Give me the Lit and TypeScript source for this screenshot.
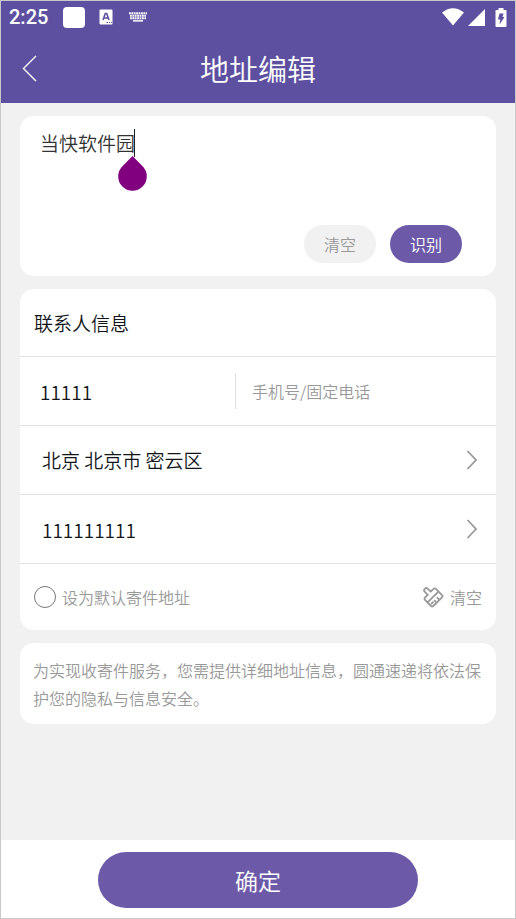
import { LitElement, html, css } from "lit";
import { customElement, state } from "lit/decorators.js";

@customElement("app-root")
export class AppRoot extends LitElement {
  @state() private address = "当快软件园";
  @state() private contact = "11111";
  @state() private phone = "";
  @state() private street = "111111111";

  static styles = css`
    :host {
      display: flex;
      flex-direction: column;
      box-sizing: border-box;
      min-height: 100vh;
      border: 1px solid #c9c9c9;
      background: #f1f1f1;
      color: #111518;
      font-family: Roboto, "Noto Sans CJK SC", sans-serif;
      font-size: 19px;
      font-weight: 350;
      line-height: 28px;
    }
    * {
      box-sizing: border-box;
    }
    button,
    input,
    textarea {
      margin: 0;
      padding: 0;
      border: 0;
      outline: 0;
      background: none;
      color: inherit;
      font: inherit;
      font-family: "Noto Sans CJK SC", sans-serif;
    }
    svg {
      display: block;
      flex: none;
    }
    .top {
      background: #5d50a1;
      color: #fff;
    }
    .status {
      display: flex;
      align-items: center;
      height: 32px;
      padding: 0 8px;
    }
    .time {
      font-size: 20px;
      font-weight: 500;
      margin-right: 15px;
    }
    .badge {
      width: 22px;
      height: 21px;
      border-radius: 4px;
      background: #fff;
      margin-right: 14px;
    }
    .lang {
      margin-right: 16px;
    }
    .signals {
      display: flex;
      align-items: center;
      gap: 4px;
      margin-left: auto;
    }
    .battery {
      margin-left: 6px;
    }
    .bar {
      display: grid;
      grid-template-columns: 56px 1fr 56px;
      align-items: center;
      height: 70px;
    }
    .back {
      display: flex;
      align-items: center;
      height: 56px;
      padding-left: 20px;
    }
    h1,
    h2,
    p {
      margin: 0;
      font-weight: 350;
      font-family: "Noto Sans CJK SC", sans-serif;
    }
    h1 {
      font-size: 29px;
      line-height: 42px;
      text-align: center;
    }
    main {
      display: flex;
      flex-direction: column;
      flex: 1;
      gap: 13px;
      padding: 13px 19px;
    }
    .card {
      border-radius: 14px;
      background: #fff;
    }
    .paste {
      display: flex;
      flex-direction: column;
      height: 160px;
      padding: 13px 34px 13px 20px;
    }
    .entry {
      position: relative;
      flex: 1;
    }
    .entry textarea {
      display: block;
      width: 100%;
      height: 84px;
      resize: none;
      color: #333;
    }
    .caret {
      position: absolute;
      top: 0;
      left: 94px;
      width: 1px;
      height: 28px;
      background: #222;
    }
    .handle {
      position: absolute;
      top: 27px;
      left: 78px;
    }
    .actions {
      display: flex;
      justify-content: flex-end;
      gap: 14px;
    }
    .pill {
      width: 72px;
      height: 38px;
      border-radius: 19px;
      font-size: 16px;
      background: #f1f1f1;
      color: #999;
    }
    .primary {
      background: #6c5aa9;
      color: #fff;
    }
    .row {
      display: flex;
      align-items: center;
      height: 69px;
      padding: 0 18px 0 22px;
      border-bottom: 1px solid #e2e2e2;
      width: 100%;
      text-align: left;
    }
    .title {
      height: 68px;
      padding: 0 14px;
    }
    h2 {
      font-size: 19px;
    }
    .row input[type="text"],
    .row input[type="tel"] {
      flex: 1;
      min-width: 0;
      height: 36px;
    }
    .pair {
      display: grid;
      grid-template-columns: 195px 1fr;
      padding-left: 20px;
    }
    .row input.phone {
      padding-left: 16px;
      border-left: 1px solid #dedede;
      font-size: 16px;
    }
    .phone::placeholder {
      color: #999;
      opacity: 1;
    }
    .region {
      border-radius: 0;
      justify-content: space-between;
    }
    .options {
      display: flex;
      justify-content: space-between;
      align-items: center;
      height: 66px;
      padding: 0 14px;
      color: #999;
      font-family: "Noto Sans CJK SC", sans-serif;
      font-size: 16px;
    }
    .default,
    .clear {
      display: flex;
      align-items: center;
      gap: 6px;
    }
    .default input {
      appearance: none;
      width: 22px;
      height: 22px;
      border: 1px solid #777;
      border-radius: 50%;
    }
    .default input:checked {
      background: #6c5aa9;
    }
    .note {
      padding: 13px 13px 12px;
      color: #999;
      font-size: 16px;
    }
    footer {
      display: flex;
      justify-content: center;
      padding: 12px 20px 10px;
      background: #fff;
    }
    .submit {
      width: 100%;
      max-width: 320px;
      height: 56px;
      border-radius: 28px;
      font-size: 23px;
    }
  `;

  private chevron() {
    return html`<svg width="12" height="20" viewBox="0 0 12 20" fill="none" stroke="#999" stroke-width="1.8">
      <path d="M1.5 1 L10 10 L1.5 19" />
    </svg>`;
  }

  private clearForm() {
    this.contact = "";
    this.phone = "";
    this.street = "";
  }

  render() {
    return html`
      <header class="top">
        <div class="status">
          <span class="time">2:25</span>
          <span class="badge"></span>
          <svg class="lang" width="14" height="16" viewBox="0 0 14 16">
            <rect x="0.5" y="0.5" width="13" height="15" rx="1" fill="#fff" />
            <path d="M4 11 L6.3 4.5 H7.7 L10 11 M5 9 H9" fill="none" stroke="#5d50a1" stroke-width="1.6" />
            <path d="M7.5 13.5 H9 M10 13.5 H11 M12 13.5 H13" stroke="#5d50a1" stroke-width="1.2" />
          </svg>
          <svg width="18" height="10" viewBox="0 0 18 10" fill="none" stroke="#fff">
            <path d="M0 1.2 H18 M1 3.7 H17 M1 6.2 H17" stroke-width="1.9" stroke-dasharray="1.8 0.6" />
            <path d="M4 8.8 H14" stroke-width="1.8" opacity="0.85" />
          </svg>
          <div class="signals">
            <svg width="22" height="18" viewBox="0 0 22 18">
              <path d="M0 4.5 Q11 -4 22 4.5 L11 17.5 Z" fill="#fff" />
            </svg>
            <svg width="17" height="17" viewBox="0 0 17 17"><path d="M17 0 V17 H0 Z" fill="#fff" /></svg>
            <svg class="battery" width="12" height="19" viewBox="0 0 12 19">
              <path d="M1 2 H3.5 V0 H8.5 V2 H11 Q11.5 2 11.5 3 V18 Q11.5 19 10.5 19 H1.5 Q0.5 19 0.5 18 V3 Q0.5 2 1 2 Z" fill="#fff" />
              <path d="M4.5 5.5 H8.5 L7.5 9 H9.5 L4.5 16.5 L5.3 11.5 H3 Z" fill="#5d50a1" />
            </svg>
          </div>
        </div>
        <div class="bar">
          <button class="back" aria-label="返回">
            <svg width="17" height="28" viewBox="0 0 17 28" fill="none" stroke="#fff" stroke-width="1.4">
              <path d="M15 2 L2.5 14.5 L15 27" />
            </svg>
          </button>
          <h1>地址编辑</h1>
        </div>
      </header>

      <main>
        <section class="card paste">
          <div class="entry">
            <textarea
              aria-label="地址"
              .value=${this.address}
              @input=${(e: Event) => (this.address = (e.target as HTMLTextAreaElement).value)}
            ></textarea>
            <span class="caret"></span>
            <svg class="handle" width="29" height="35" viewBox="0 0 29 35">
              <path d="M14.5 0 L24.6 10.3 A14.3 14.3 0 1 1 4.4 10.3 Z" fill="#800080" />
            </svg>
          </div>
          <div class="actions">
            <button class="pill" @click=${() => (this.address = "")}>清空</button>
            <button class="pill primary">识别</button>
          </div>
        </section>

        <section class="card">
          <div class="row title"><h2>联系人信息</h2></div>
          <div class="row pair">
            <input type="text" aria-label="联系人" .value=${this.contact} />
            <input class="phone" type="tel" aria-label="电话" placeholder="手机号/固定电话" .value=${this.phone} />
          </div>
          <button class="row region"><span>北京 北京市 密云区</span>${this.chevron()}</button>
          <div class="row">
            <input type="text" aria-label="详细地址" .value=${this.street} />
            ${this.chevron()}
          </div>
          <div class="options">
            <label class="default"><input type="checkbox" />设为默认寄件地址</label>
            <button class="clear" @click=${this.clearForm}>
              <svg width="21" height="21" viewBox="0 0 21 21" fill="none" stroke="#999" stroke-width="1.8" stroke-linejoin="round" stroke-linecap="round">
                <path d="M4.8 7.8 L1.8 4.8 A2.1 2.1 0 0 1 4.8 1.8 L7.7 4.5 L10.6 1.8 Q11.8 0.9 12.9 1.9 L19 8.1 Q20 9.2 19 10.3 L10.3 19 Q9.2 20 8.1 19 L2 12.9 Q1 11.8 2 10.7 Z" />
                <path d="M4.8 15.2 L15.2 4.8 M8.6 16.6 L10 15.2 M11.6 13.6 L12.8 14.8 M14.4 10.8 L15.8 12.2" />
              </svg>
              清空
            </button>
          </div>
        </section>

        <p class="card note">为实现收寄件服务，您需提供详细地址信息，圆通速递将依法保护您的隐私与信息安全。</p>
      </main>

      <footer><button class="submit primary">确定</button></footer>
    `;
  }
}
